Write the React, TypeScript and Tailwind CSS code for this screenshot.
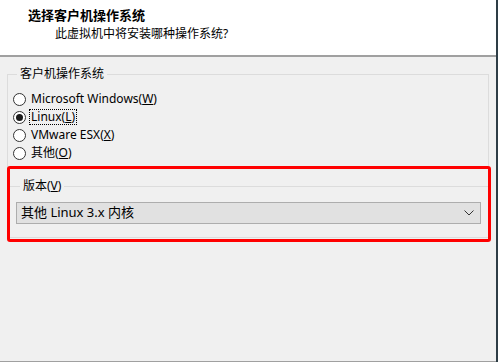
import React from 'react';

const font = { fontFamily: '"Noto Sans", "Noto Sans CJK SC", sans-serif' };

function Radio({ checked, children, focus }: { checked?: boolean; children: React.ReactNode; focus?: boolean }) {
  return (
    <div className="flex h-[18px] items-center">
      <span className="flex h-[13px] w-[13px] items-center justify-center rounded-full border border-[#333333] bg-white">
        {checked && <span className="h-[7px] w-[7px] rounded-full bg-[#1a1a1a]" />}
      </span>
      <span className={`ml-[4px] px-[1px] leading-[14px] ${focus ? 'outline outline-1 outline-dotted outline-[#000]' : ''}`}>
        {children}
      </span>
    </div>
  );
}

export default function App() {
  return (
    <div className="flex h-[362px] w-[498px] bg-[#2e3d46] text-[12px] text-black" style={font}>
      <div className="flex w-[496px] flex-col border-b border-[#a0a0a0] bg-[#f0f0f0]">
        <div className="h-[57px] border-b-2 border-[#a0a0a0] bg-white pl-[28px] pt-[6px]">
          <div className="text-[13px] font-bold leading-[18px]">选择客户机操作系统</div>
          <div className="ml-[27px] mt-[1px] leading-[18px]">此虚拟机中将安装哪种操作系统?</div>
        </div>

        <div className="px-[7px] pt-[9px]">
          <fieldset className="w-[482px] border border-[#dcdcdc] pb-[6px] pl-[5px] pt-[8px]">
            <legend className="ml-[4px] px-[3px] leading-[16px]">客户机操作系统</legend>
            <Radio>Microsoft Windows(<u>W</u>)</Radio>
            <Radio checked focus>Linux(<u>L</u>)</Radio>
            <Radio>VMware ESX(<u>X</u>)</Radio>
            <Radio>其他(<u>O</u>)</Radio>
          </fieldset>

          <div className="relative mt-[9px]">
            <fieldset className="w-[482px] border border-[#dcdcdc] px-[8px] pb-[13px] pt-[8px]">
              <legend className="ml-[4px] px-[3px] leading-[16px]">版本(<u>V</u>)</legend>
              <div className="flex h-[22px] w-[465px] items-center justify-between border border-[#adadad] bg-[#e1e1e1] pl-[4px] pr-[6px]">
                <span className="text-[13px]">其他 Linux 3.x 内核</span>
                <svg width="10" height="6" viewBox="0 0 10 6" fill="none" stroke="#333" strokeWidth="1">
                  <path d="M0.5 0.5 L5 5 L9.5 0.5" />
                </svg>
              </div>
            </fieldset>
            <div className="pointer-events-none absolute left-[0px] right-[-2px] top-[-12px] bottom-[-4px] rounded-[3px] border-[3px] border-[#ff0000]" />
          </div>
        </div>
      </div>
    </div>
  );
}
